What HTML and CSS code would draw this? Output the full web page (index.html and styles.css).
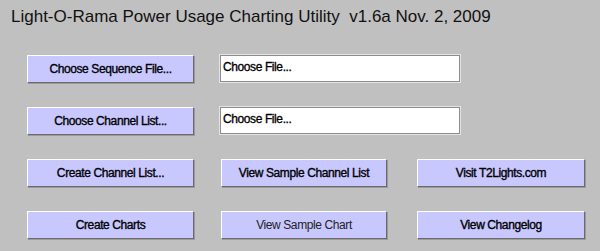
FILE: index.html
```html
<!DOCTYPE html>
<html lang="en">
<head>
    <meta charset="UTF-8">
    <title>Light-O-Rama Power Usage Charting Utility</title>
    <link rel="stylesheet" href="styles.css">
</head>
<body>
    <div class="app">
        <div class="title">Light-O-Rama Power Usage Charting Utility&nbsp; v1.6a Nov. 2, 2009</div>
        <div class="panel">
            <button class="btn col1">Choose Sequence File...</button>
            <div class="file-box">Choose File...</div>

            <button class="btn col1">Choose Channel List...</button>
            <div class="file-box">Choose File...</div>

            <button class="btn col1">Create Channel List...</button>
            <button class="btn col2">View Sample Channel List</button>
            <button class="btn col3">Visit T2Lights.com</button>

            <button class="btn col1">Create Charts</button>
            <button class="btn col2 light">View Sample Chart</button>
            <button class="btn col3">View Changelog</button>
        </div>
    </div>
</body>
</html>
```

FILE: styles.css
```css
body {
    margin: 0;
    background-color: #c0c0c0;
    font-family: "Liberation Sans", Arial, sans-serif;
}
.app {
    width: 600px;
    height: 251px;
}
.title {
    padding: 7px 0 0 11px;
    font-size: 17px;
    color: #111;
    white-space: pre;
}
.panel {
    display: grid;
    grid-template-columns: 167px 166px 171px;
    grid-auto-rows: 28px;
    column-gap: 27px;
    row-gap: 24px;
    padding: 0 0 0 27px;
    margin-top: 28px;
}
.btn {
    margin: 0;
    padding: 0;
    width: 100%;
    height: 28px;
    background-color: #c8c8ff;
    border: 1px solid;
    border-color: #ffffff #6a6a6a #6a6a6a #ffffff;
    box-shadow: 1px 1px 0 #9a9a9a;
    font-family: "Liberation Sans", Arial, sans-serif;
    font-size: 12px;
    letter-spacing: -0.4px;
    color: #000;
    -webkit-text-stroke: 0.35px #000;
}
.col1 {
    grid-column: 1;
}
.col2 {
    grid-column: 2;
}
.col3 {
    grid-column: 3;
    justify-self: end;
    width: 168px;
}
.btn.light {
    -webkit-text-stroke: 0;
    color: #222;
}
.file-box {
    grid-column: 2 / 4;
    margin-left: -1px;
    width: 236px;
    height: 25px;
    background: #fff;
    border: 1px solid #8c8c8c;
    box-shadow: 0 0 0 1px #e4e4e4;
    font-size: 12px;
    letter-spacing: -0.4px;
    line-height: 22px;
    padding-left: 2px;
    -webkit-text-stroke: 0.3px #000;
}
```
